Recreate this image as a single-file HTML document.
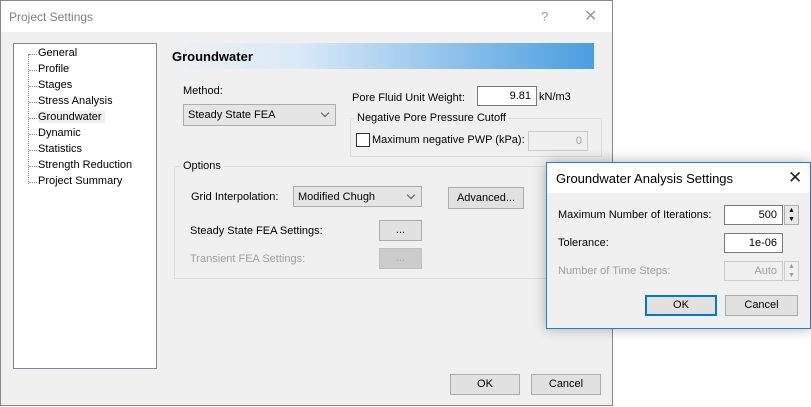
<!DOCTYPE html>
<html><head><meta charset="utf-8"><style>
*{box-sizing:border-box;margin:0;padding:0}
body{width:811px;height:407px;background:#fff;font-family:"Liberation Sans",sans-serif;font-size:11px;color:#000;position:relative;overflow:hidden}
.a{position:absolute;white-space:nowrap}
.dlg{position:absolute;left:0;top:0;width:613px;height:406px;background:#f0f0f0;border:1px solid #888}
.tb{position:absolute;left:0;top:0;width:100%;height:31px;background:#fff}
.btn{position:absolute;background:#e1e1e1;border:1px solid #adadad;text-align:center;line-height:19px}
.inp{position:absolute;background:#fff;border:1px solid #7a7a7a;text-align:right;padding-right:5px;line-height:18px}
.cmb{position:absolute;background:#e5e5e5;border:1px solid #acacac;padding-left:4px;line-height:20px}
.cmb:after{content:"";position:absolute;right:7px;top:5px;width:5px;height:5px;border-right:1px solid #555;border-bottom:1px solid #555;transform:rotate(45deg)}
.grp{position:absolute;border:1px solid #dcdcdc}
.dis{color:#a0a0a0}
.tree .it{position:absolute;left:24px}
.tree .it:before{content:"";position:absolute;left:-9px;top:7px;width:8px;border-top:1px dotted #888}
</style></head><body>
<div class="dlg">
 <div class="tb"></div>
 <div class="a" style="left:8px;top:9px;font-size:12px;color:#808080">Project Settings</div>
 <div class="a" style="left:540px;top:8px;font-size:13px;color:#999">?</div>
 <div class="a" style="left:583px;top:5px;font-size:16px;color:#999">✕</div>
 <div class="a tree" style="left:12px;top:42px;width:144px;height:326px;background:#fff;border:1px solid #828790">
  <div style="position:absolute;left:14px;top:10px;height:130px;border-left:1px dotted #888"></div>
  <div class="it" style="top:3px">General</div><div class="it" style="top:19px">Profile</div><div class="it" style="top:35px">Stages</div>
  <div class="it" style="top:51px">Stress Analysis</div><div class="it" style="top:67px;background:#eee;padding-right:3px">Groundwater</div>
  <div class="it" style="top:83px">Dynamic</div><div class="it" style="top:99px">Statistics</div><div class="it" style="top:115px">Strength Reduction</div>
  <div class="it" style="top:131px">Project Summary</div>
 </div>
 <div class="a" style="left:166px;top:42px;width:427px;height:26px;background:linear-gradient(90deg,#f0f0f0 0%,#dbeaf8 30%,#4a9ee0 100%)"></div>
 <div class="a" style="left:171px;top:48px;font-weight:bold;font-size:13px">Groundwater</div>
 <div class="a" style="left:182px;top:84px">Method:</div>
 <div class="cmb" style="left:182px;top:103px;width:153px;height:22px">Steady State FEA</div>
 <div class="a" style="left:351px;top:91px">Pore Fluid Unit Weight:</div>
 <div class="inp" style="left:476px;top:85px;width:60px;height:20px">9.81</div>
 <div class="a" style="left:538px;top:90px">kN/m3</div>
 <div class="grp" style="left:349px;top:117px;width:252px;height:39px"></div>
 <div class="a" style="left:354px;top:111px;background:#f0f0f0;padding:0 2px">Negative Pore Pressure Cutoff</div>
 <div class="a" style="left:355px;top:132px;width:14px;height:14px;background:#fff;border:1px solid #333"></div>
 <div class="a" style="left:371px;top:133px">Maximum negative PWP (kPa):</div>
 <div class="inp dis" style="left:527px;top:130px;width:60px;height:20px;background:#f0f0f0;border-color:#ccc">0</div>
 <div class="grp" style="left:173px;top:165px;width:440px;height:113px;border-right:none"></div>
 <div class="a" style="left:180px;top:159px;background:#f0f0f0;padding:0 2px">Options</div>
 <div class="a" style="left:190px;top:190px">Grid Interpolation:</div>
 <div class="cmb" style="left:292px;top:185px;width:129px;height:21px">Modified Chugh</div>
 <div class="btn" style="left:447px;top:186px;width:76px;height:22px;line-height:21px">Advanced...</div>
 <div class="a" style="left:189px;top:224px">Steady State FEA Settings:</div>
 <div class="btn" style="left:378px;top:219px;width:43px;height:21px">...</div>
 <div class="a dis" style="left:189px;top:252px">Transient FEA Settings:</div>
 <div class="btn dis" style="left:378px;top:247px;width:43px;height:21px;background:#ccc;border-color:#bfbfbf">...</div>
 <div class="btn" style="left:449px;top:373px;width:70px;height:21px">OK</div>
 <div class="btn" style="left:530px;top:373px;width:70px;height:21px">Cancel</div>
</div>
<div class="a" style="left:546px;top:162px;width:265px;height:167px;background:#f0f0f0;border:1px solid #1883d7;box-shadow:0 0 12px rgba(0,0,0,.3)">
 <div class="a" style="left:0;top:0;width:100%;height:30px;background:#fff"></div>
 <div class="a" style="left:9px;top:8px;font-size:13px">Groundwater Analysis Settings</div>
 <div class="a" style="left:241px;top:5px;font-size:17px;color:#222">✕</div>
 <div class="a" style="left:11px;top:46px">Maximum Number of Iterations:</div>
 <div class="inp" style="left:177px;top:42px;width:59px;height:20px">500</div>
 <div class="a" style="left:237px;top:42px;width:15px;height:20px;border:1px solid #adadad;background:#e8e8e8;font-size:7px;line-height:9px;text-align:center">▲<br>▼</div>
 <div class="a" style="left:11px;top:74px">Tolerance:</div>
 <div class="inp" style="left:177px;top:70px;width:59px;height:20px">1e-06</div>
 <div class="a dis" style="left:11px;top:102px">Number of Time Steps:</div>
 <div class="inp dis" style="left:177px;top:98px;width:59px;height:20px;background:#f0f0f0;border-color:#ccc">Auto</div>
 <div class="a dis" style="left:237px;top:98px;width:15px;height:20px;border:1px solid #ccc;font-size:7px;line-height:9px;text-align:center">▲<br>▼</div>
 <div class="btn" style="left:98px;top:132px;width:72px;height:21px;border:2px solid #0078d7;line-height:17px">OK</div>
 <div class="btn" style="left:178px;top:132px;width:73px;height:21px">Cancel</div>
</div>
</body></html>
